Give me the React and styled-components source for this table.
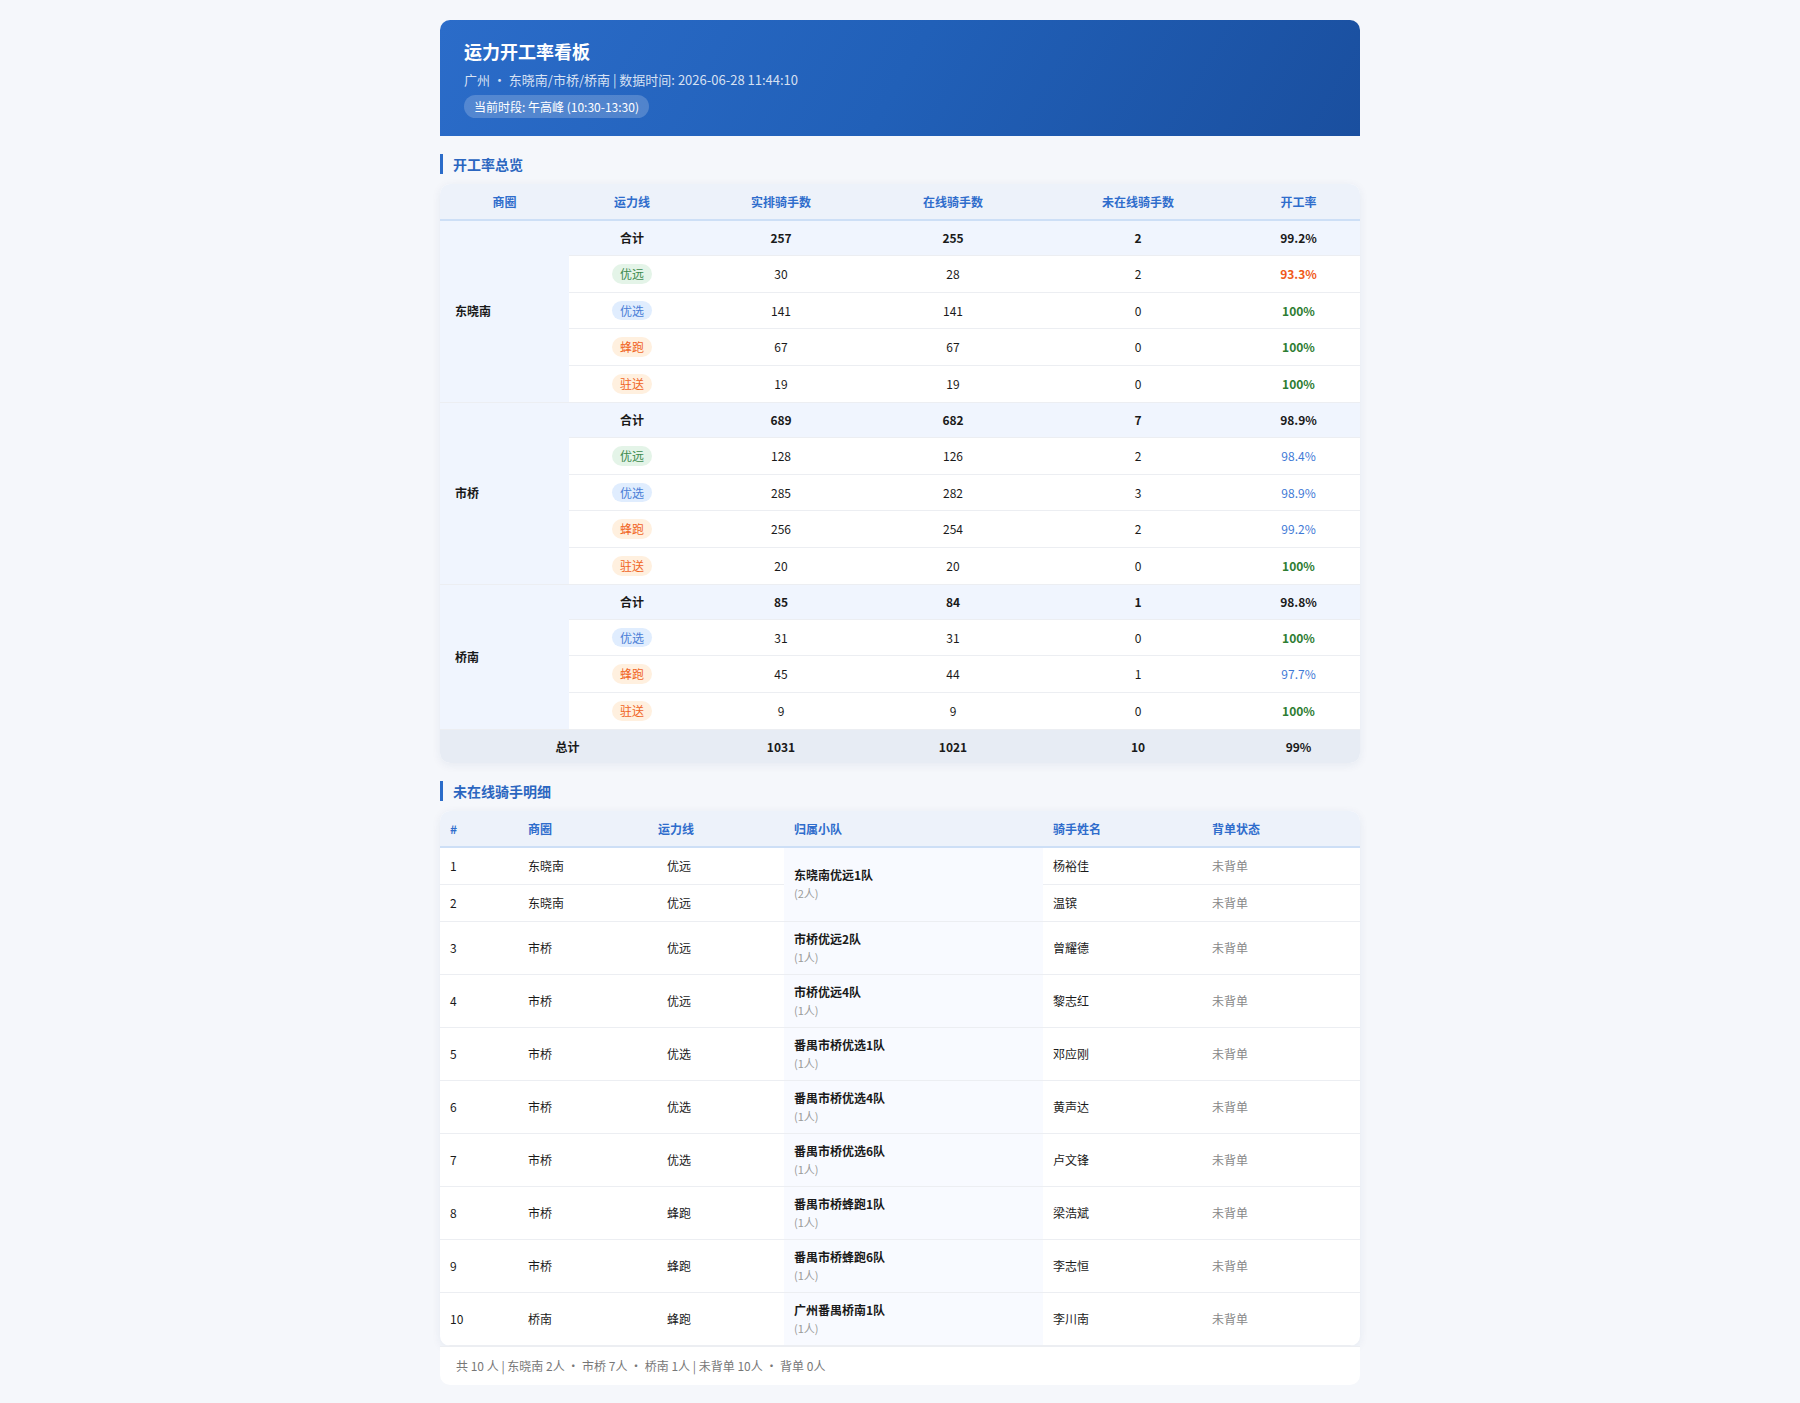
import React from "react";
import styled, { createGlobalStyle } from "styled-components";

const GlobalStyle = createGlobalStyle`
  body {
    margin: 0;
    background: #f5f7fb;
    font-family: "Noto Sans CJK SC", "Noto Sans", sans-serif;
    color: #1a1a1a;
    font-size: 12px;
  }
`;

const groups = [
  {
    name: "东晓南",
    total: [257, 255, 2, "99.2%"],
    rows: [
      ["优远", 30, 28, 2, "93.3%"],
      ["优选", 141, 141, 0, "100%"],
      ["蜂跑", 67, 67, 0, "100%"],
      ["驻送", 19, 19, 0, "100%"],
    ],
  },
  {
    name: "市桥",
    total: [689, 682, 7, "98.9%"],
    rows: [
      ["优远", 128, 126, 2, "98.4%"],
      ["优选", 285, 282, 3, "98.9%"],
      ["蜂跑", 256, 254, 2, "99.2%"],
      ["驻送", 20, 20, 0, "100%"],
    ],
  },
  {
    name: "桥南",
    total: [85, 84, 1, "98.8%"],
    rows: [
      ["优选", 31, 31, 0, "100%"],
      ["蜂跑", 45, 44, 1, "97.7%"],
      ["驻送", 9, 9, 0, "100%"],
    ],
  },
];

const riders = [
  { no: 1, area: "东晓南", line: "优远", team: "东晓南优远1队", count: 2, name: "杨裕佳", span: 2 },
  { no: 2, area: "东晓南", line: "优远", name: "温镔", span: 0 },
  { no: 3, area: "市桥", line: "优远", team: "市桥优远2队", count: 1, name: "曾耀德", span: 1 },
  { no: 4, area: "市桥", line: "优远", team: "市桥优远4队", count: 1, name: "黎志红", span: 1 },
  { no: 5, area: "市桥", line: "优选", team: "番禺市桥优选1队", count: 1, name: "邓应刚", span: 1 },
  { no: 6, area: "市桥", line: "优选", team: "番禺市桥优选4队", count: 1, name: "黄声达", span: 1 },
  { no: 7, area: "市桥", line: "优选", team: "番禺市桥优选6队", count: 1, name: "卢文锋", span: 1 },
  { no: 8, area: "市桥", line: "蜂跑", team: "番禺市桥蜂跑1队", count: 1, name: "梁浩斌", span: 1 },
  { no: 9, area: "市桥", line: "蜂跑", team: "番禺市桥蜂跑6队", count: 1, name: "李志恒", span: 1 },
  { no: 10, area: "桥南", line: "蜂跑", team: "广州番禺桥南1队", count: 1, name: "李川南", span: 1 },
];

const tagColors = {
  优远: ["#e4f4e8", "#3d8b4e"],
  优选: ["#e0edfe", "#4a7ed6"],
  蜂跑: ["#fff0df", "#f0641e"],
  驻送: ["#fff0df", "#f0641e"],
};

function rateTone(rate) {
  const v = parseFloat(rate);
  if (v >= 100) return "good";
  if (v < 95) return "bad";
  return "mid";
}

const Page = styled.div`
  width: 920px;
  margin: 0 auto;
  padding: 20px 0;
`;

const Header = styled.header`
  background: linear-gradient(120deg, #2b6cc9 0%, #2160b8 50%, #1a4f9f 100%);
  border-radius: 10px 10px 0 0;
  padding: 19px 24px 18px;
  color: #fff;
`;

const Title = styled.h1`
  margin: 0;
  font-size: 18px;
  line-height: 25px;
  font-weight: 700;
`;

const SubTitle = styled.div`
  margin-top: 6px;
  font-size: 13px;
  line-height: 19px;
  color: rgba(255, 255, 255, 0.82);
`;

const Period = styled.span`
  display: inline-block;
  margin-top: 6px;
  padding: 3px 10px;
  line-height: 17px;
  font-size: 12px;
  border-radius: 12px;
  background: rgba(255, 255, 255, 0.2);
  color: #fff;
`;

const SectionTitle = styled.h2`
  margin: 18px 0 10px;
  border-left: 3px solid #2b6cc9;
  padding-left: 10px;
  font-size: 14px;
  line-height: 20px;
  font-weight: 700;
  color: #2b66c0;
`;

const Card = styled.div`
  background: #fff;
  border-radius: 10px;
  overflow: hidden;
  box-shadow: 0 2px 10px rgba(30, 60, 120, 0.07);
`;

const Table = styled.table`
  width: 100%;
  border-collapse: collapse;
  table-layout: fixed;
`;

const Th = styled.th`
  background: #edf2fa;
  color: #2f6dcc;
  font-weight: 700;
  font-size: 12px;
  line-height: 18px;
  padding: 9px 10px 8px;
  border-bottom: 2px solid #cddff6;
  text-align: ${(p) => p.$align || "center"};
`;

const Td = styled.td`
  padding: 8px 10px;
  line-height: 18px;
  font-size: 12px;
  text-align: center;
  border-bottom: 1px solid #eceef2;
  vertical-align: middle;
`;

const TagCell = styled(Td)`
  line-height: 19.7px;
`;

const AreaCell = styled(Td)`
  text-align: left;
  padding-left: 15px;
  font-weight: 700;
  background: #f9fbff;
`;

const SumRow = styled.tr`
  td {
    background: #f0f5fe;
    font-weight: 700;
  }
`;

const TotalRow = styled.tr`
  td {
    background: #e7ecf4;
    font-weight: 700;
    border-bottom: none;
    padding-top: 8px;
    padding-bottom: 7px;
  }
`;

const Tag = styled.span`
  display: inline-block;
  vertical-align: top;
  padding: 0 8px;
  line-height: 19.7px;
  border-radius: 10px;
  font-size: 12px;
  background: ${(p) => tagColors[p.$type][0]};
  color: ${(p) => tagColors[p.$type][1]};
`;

const Rate = styled.span`
  font-weight: ${(p) => (p.$tone === "mid" ? 400 : 700)};
  color: ${(p) =>
    p.$tone === "good" ? "#2e7d32" : p.$tone === "bad" ? "#f05a1a" : "#3f7ad6"};
`;

const DTd = styled(Td)`
  text-align: left;
  line-height: 20px;
`;

const LineText = styled.span`
  padding: 0 9px;
`;

const TeamCell = styled(DTd)`
  background: #f8faff;
`;

const TeamName = styled.div`
  font-weight: 700;
  line-height: 18px;
`;

const TeamCount = styled.div`
  font-size: 11px;
  line-height: 18px;
  color: #9a9a9a;
`;

const Status = styled(DTd)`
  color: #888;
`;

const Footer = styled.div`
  background: #fff;
  border-top: 1px solid #eceef2;
  border-radius: 0 0 10px 10px;
  padding: 10px 16px;
  line-height: 18px;
  font-size: 12px;
  color: #777;
`;

function SummaryTable() {
  return (
    <Card>
      <Table>
        <colgroup>
          <col style={{ width: 129 }} />
          <col style={{ width: 126 }} />
          <col style={{ width: 172 }} />
          <col style={{ width: 172 }} />
          <col style={{ width: 198 }} />
          <col style={{ width: 123 }} />
        </colgroup>
        <thead>
          <tr>
            <Th>商圈</Th>
            <Th>运力线</Th>
            <Th>实排骑手数</Th>
            <Th>在线骑手数</Th>
            <Th>未在线骑手数</Th>
            <Th>开工率</Th>
          </tr>
        </thead>
        <tbody>
          {groups.map((g) => (
            <React.Fragment key={g.name}>
              <SumRow>
                <AreaCell rowSpan={g.rows.length + 1}>{g.name}</AreaCell>
                <Td>合计</Td>
                {g.total.map((v, i) => (
                  <Td key={i}>{v}</Td>
                ))}
              </SumRow>
              {g.rows.map((r, i) => (
                <tr key={i}>
                  <TagCell>
                    <Tag $type={r[0]}>{r[0]}</Tag>
                  </TagCell>
                  <TagCell>{r[1]}</TagCell>
                  <TagCell>{r[2]}</TagCell>
                  <TagCell>{r[3]}</TagCell>
                  <TagCell>
                    <Rate $tone={rateTone(r[4])}>{r[4]}</Rate>
                  </TagCell>
                </tr>
              ))}
            </React.Fragment>
          ))}
          <TotalRow>
            <Td colSpan={2}>总计</Td>
            <Td>1031</Td>
            <Td>1021</Td>
            <Td>10</Td>
            <Td>99%</Td>
          </TotalRow>
        </tbody>
      </Table>
    </Card>
  );
}

function DetailTable() {
  return (
    <>
      <Card>
        <Table>
          <colgroup>
            <col style={{ width: 78 }} />
            <col style={{ width: 130 }} />
            <col style={{ width: 136 }} />
            <col style={{ width: 259 }} />
            <col style={{ width: 159 }} />
            <col style={{ width: 158 }} />
          </colgroup>
          <thead>
            <tr>
              <Th $align="left">#</Th>
              <Th $align="left">商圈</Th>
              <Th $align="left">运力线</Th>
              <Th $align="left">归属小队</Th>
              <Th $align="left">骑手姓名</Th>
              <Th $align="left">背单状态</Th>
            </tr>
          </thead>
          <tbody>
            {riders.map((r) => (
              <tr key={r.no}>
                <DTd>{r.no}</DTd>
                <DTd>{r.area}</DTd>
                <DTd>
                  <LineText>{r.line}</LineText>
                </DTd>
                {r.span > 0 && (
                  <TeamCell rowSpan={r.span}>
                    <TeamName>{r.team}</TeamName>
                    <TeamCount>({r.count}人)</TeamCount>
                  </TeamCell>
                )}
                <DTd>{r.name}</DTd>
                <Status>未背单</Status>
              </tr>
            ))}
          </tbody>
        </Table>
      </Card>
      <Footer>
        共 10 人 | 东晓南 2人 · 市桥 7人 · 桥南 1人 | 未背单 10人 · 背单 0人
      </Footer>
    </>
  );
}

export default function App() {
  return (
    <>
      <GlobalStyle />
      <Page>
        <Header>
          <Title>运力开工率看板</Title>
          <SubTitle>广州 · 东晓南/市桥/桥南 | 数据时间: 2026-06-28 11:44:10</SubTitle>
          <Period>当前时段: 午高峰 (10:30-13:30)</Period>
        </Header>
        <SectionTitle>开工率总览</SectionTitle>
        <SummaryTable />
        <SectionTitle>未在线骑手明细</SectionTitle>
        <DetailTable />
      </Page>
    </>
  );
}
